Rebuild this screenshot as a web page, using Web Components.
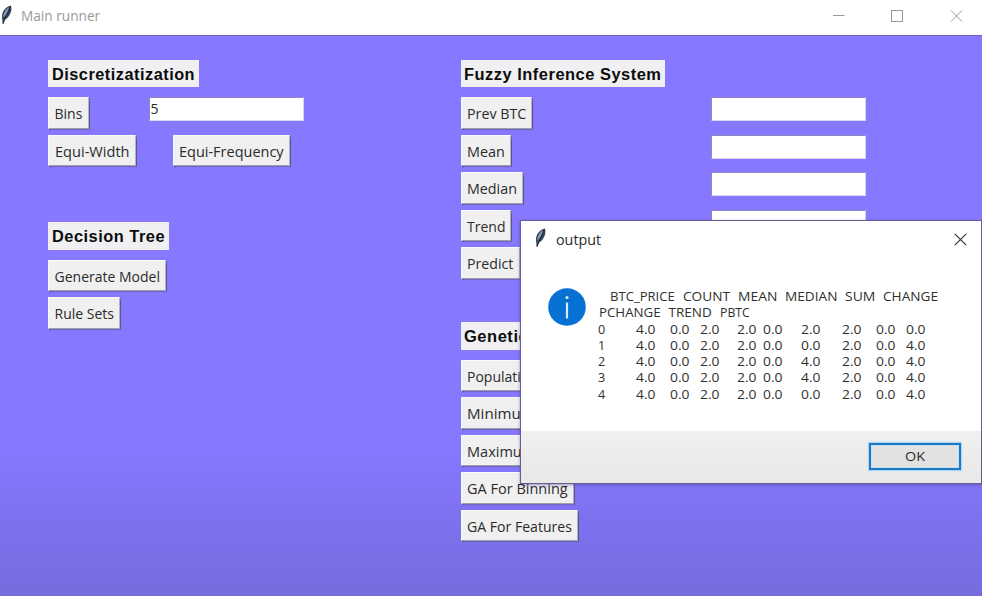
<!DOCTYPE html>
<html lang="en">
<head>
<meta charset="utf-8">
<title>Main runner</title>
<style>
html, body { margin: 0; height: 100%; overflow: hidden; }
body { font-family: "Open Sans", "Noto Sans", sans-serif; color: #2b2b2b; }
</style>
</head>
<body>
<main-window></main-window>
<script>
const define = (name, html, setup) => {
  const template = document.createElement('template');
  template.innerHTML = html;
  customElements.define(name, class extends HTMLElement {
    connectedCallback() {
      if (this.shadowRoot) return;
      this.attachShadow({ mode: 'open' }).append(template.content.cloneNode(true));
      if (setup) setup(this, this.shadowRoot);
    }
  });
};

/* Text condensed or widened to an exact width: <fit-text w="27"> */
define('fit-text', `
<style>
:host { display: block; flex: none; }
span { display: block; width: max-content; white-space: pre; transform-origin: 0 50%; }
</style><span><slot></slot></span>`, (el, root) => {
  const span = root.querySelector('span');
  const w = parseFloat(el.getAttribute('w'));
  el.style.width = w + 'px';
  span.style.transform = 'scaleX(' + (w / span.offsetWidth) + ')';
});

define('feather-icon', `
<style>:host { display: block; flex: none; width: 14px; height: 20px; } svg { display: block; }</style>
<svg width="14" height="20" viewBox="0 0 14 20">
<path d="M2.300 14.500C.8 8.500 4.500 1.800 10.800.4c2 4.500-.8 11.500-6.300 14.600L3.600 19 2.500 18.500Z" fill="#34475a"/>
<path d="M3.300 12.500C3 8.500 5.500 4 9 2.200 8.500 6 6 10 3.300 12.500Z" fill="#7f98ad"/>
<path d="M10.600 1C9 6.500 5.500 11.500 3 18.500" fill="none" stroke="#1c2732" stroke-width=".9"/>
</svg>`);

define('tk-label', `
<style>
:host { display: flex; box-sizing: border-box; width: max-content; height: 27.500px; padding: 0 3.500px 0 3.500px;
  background: #f0f0f2; font: bold 16px/29px "Liberation Sans", sans-serif; letter-spacing: .5px; color: #0c0c0c; }
</style><slot></slot>`);

define('tk-button', `
<style>
:host { display: flex; box-sizing: border-box; width: max-content; height: 31.500px; padding: 0 5px 0 5.500px;
  background: #f0f0f0; border: solid; border-width: 1px; border-color: #fafafa #b5b4ba #9f9da8 #fafafa;
  box-shadow: .5px 1px 1px #5a5492; font-size: 14px; line-height: 31px; }
</style><slot></slot>`);

define('tk-entry', `
<style>
:host { display: flex; box-sizing: border-box; width: 155.500px; height: 24px; padding-left: 1px;
  background: #fff; border: 1px solid #d9d6f0; border-top-color: #8f88c4; border-left-color: #8f88c4;
  font-size: 14px; line-height: 21px; }
</style><slot></slot>`);

define('title-bar', `
<style>
:host { display: flex; height: 35px; box-sizing: border-box; padding: 5px 19px 0 0; background: #fff; color: #999; font-size: 14px; line-height: 22px; }
fit-text { margin-left: 7px; }
.controls { display: flex; gap: 46px; margin-left: auto; padding-top: 4px; }
svg { display: block; fill: none; stroke: #999; stroke-width: 1; }
</style>
<feather-icon></feather-icon><fit-text w="79">Main runner</fit-text>
<div class="controls">
<svg width="13" height="13"><path d="M1 6.500H12.500"/></svg>
<svg width="13" height="13"><rect x=".5" y="1.500" width="11" height="11"/></svg>
<svg width="13" height="13"><path d="M1 1.500L12 12.500M12 1.500L1 12.500"/></svg>
</div>`);

define('output-dialog', `
<style>
:host { display: grid; grid-template-rows: 38px 172px 1fr; box-sizing: border-box; width: 462px; height: 264px;
  border: 1px solid #665f91; background: #fff; box-shadow: 0 1px 3px #352c8077; }
header { display: flex; padding: 7px 14px 0 13px; font-size: 14px; line-height: 23px; }
header fit-text { margin-left: 8px; }
header svg { margin: 5px 0 0 auto; }
.body { display: flex; padding-left: 27px; gap: 12px; }
.info { flex: none; margin-top: 29px; }
.msg { padding-top: 29px; font-size: 13.500px; line-height: 16.300px; color: #303030; }
.line { display: flex; height: 16.300px; }
.head { margin-left: 12px; gap: 8px; }
.head2 { gap: 8px; margin-left: .5px; }
.row { display: grid; grid-template-columns: 37.500px 34px 30px 37.500px 26px 37.500px 41px 34px 30px 20px; }
footer { display: flex; justify-content: flex-end; padding: 12px 20px 0 0; background: linear-gradient(#f0f0f0, #e8e8e6); }
.ok { display: flex; justify-content: center; box-sizing: border-box; width: 92px; height: 27px; border: 2px solid #2178c2;
  background: #e2e2e2; box-shadow: 0 0 1px 1px #a9d9f7, inset 0 0 0 1px #c5e2f4; font-size: 13px; line-height: 23px; }
</style>
<header><feather-icon></feather-icon><fit-text w="45">output</fit-text>
<svg width="13" height="13"><path d="M.8.800L12.200 12.200M12.200.800L.8 12.200" fill="none" stroke="#333" stroke-width="1.200"/></svg></header>
<div class="body">
<svg class="info" width="38" height="38"><circle cx="19" cy="19" r="18.800" fill="#0671d3"/><path d="M19 14.500V30.500" stroke="#d5ecff" stroke-width="2.200"/><circle cx="19" cy="9.500" r="1.600" fill="#d5ecff"/></svg>
<div class="msg">
<div class="line head"><fit-text w="65">BTC_PRICE</fit-text><fit-text w="46.500">COUNT</fit-text><fit-text w="39">MEAN</fit-text><fit-text w="52.500">MEDIAN</fit-text><fit-text w="30">SUM</fit-text><fit-text w="54.500">CHANGE</fit-text></div>
<div class="line head2"><fit-text w="62">PCHANGE</fit-text><fit-text w="43">TREND</fit-text><fit-text w="30">PBTC</fit-text></div>
</div></div>
<footer><div class="ok"><fit-text w="20">OK</fit-text></div></footer>`, (el, root) => {
  const rows = [
    '0 4.0 0.0 2.0 2.0 0.0 2.0 2.0 0.0 0.0',
    '1 4.0 0.0 2.0 2.0 0.0 0.0 2.0 0.0 4.0',
    '2 4.0 0.0 2.0 2.0 0.0 4.0 2.0 0.0 4.0',
    '3 4.0 0.0 2.0 2.0 0.0 4.0 2.0 0.0 4.0',
    '4 4.0 0.0 2.0 2.0 0.0 0.0 2.0 0.0 4.0'
  ];
  root.querySelector('.msg').insertAdjacentHTML('beforeend', rows.map(r =>
    '<div class="line row">' + r.split(' ').map(v =>
      `<fit-text w="${v.length > 1 ? 19.5 : 7.5}">${v}</fit-text>`).join('') + '</div>').join(''));
});

define('main-window', `
<style>
:host { display: flex; flex-direction: column; position: relative; width: 982px; height: 596px; overflow: hidden; background: #8678ff; }
main { flex: 1; display: grid; grid-template-columns: 412.500px 250px 1fr; padding: 23.500px 0 0 48px;
  background: linear-gradient(#8678ff 415px, #7f72f1 475px, #776bdf 561px); border-top: 1px solid #6c65b5; box-sizing: border-box; }
.col { display: grid; grid-auto-rows: 37.500px; align-content: start; }
.left { grid-template-rows: 37.500px 37.500px 87.500px; }
.row { display: flex; }
.row tk-entry { margin-left: 60px; }
.row tk-button + tk-button { margin-left: 37px; }
.entries { padding: 37.500px 0 0; }
output-dialog { position: absolute; left: 520px; top: 220px; }
</style>
<title-bar></title-bar>
<main>
<div class="col left">
<tk-label><fit-text w="143.500">Discretizatization</fit-text></tk-label>
<div class="row"><tk-button><fit-text w="28">Bins</fit-text></tk-button><tk-entry><fit-text w="8">5</fit-text></tk-entry></div>
<div class="row"><tk-button><fit-text w="75">Equi-Width</fit-text></tk-button><tk-button><fit-text w="104.500">Equi-Frequency</fit-text></tk-button></div>
<tk-label><fit-text w="113.500">Decision Tree</fit-text></tk-label>
<tk-button><fit-text w="105">Generate Model</fit-text></tk-button>
<tk-button><fit-text w="59">Rule Sets</fit-text></tk-button>
</div>
<div class="col">
<tk-label><fit-text w="197">Fuzzy Inference System</fit-text></tk-label>
<tk-button><fit-text w="59">Prev BTC</fit-text></tk-button>
<tk-button><fit-text w="38">Mean</fit-text></tk-button>
<tk-button><fit-text w="50">Median</fit-text></tk-button>
<tk-button><fit-text w="38">Trend</fit-text></tk-button>
<tk-button><fit-text w="46.500">Predict</fit-text></tk-button>
<div></div>
<tk-label><fit-text w="64">Genetic</fit-text></tk-label>
<tk-button><fit-text w="54">Populati</fit-text></tk-button>
<tk-button><fit-text w="54">Minimu</fit-text></tk-button>
<tk-button><fit-text w="55">Maximu</fit-text></tk-button>
<tk-button><fit-text w="100.500">GA For Binning</fit-text></tk-button>
<tk-button><fit-text w="104.500">GA For Features</fit-text></tk-button>
</div>
<div class="col entries"><tk-entry></tk-entry><tk-entry></tk-entry><tk-entry></tk-entry><tk-entry></tk-entry></div>
</main>
<output-dialog></output-dialog>`);
</script>
</body>
</html>
